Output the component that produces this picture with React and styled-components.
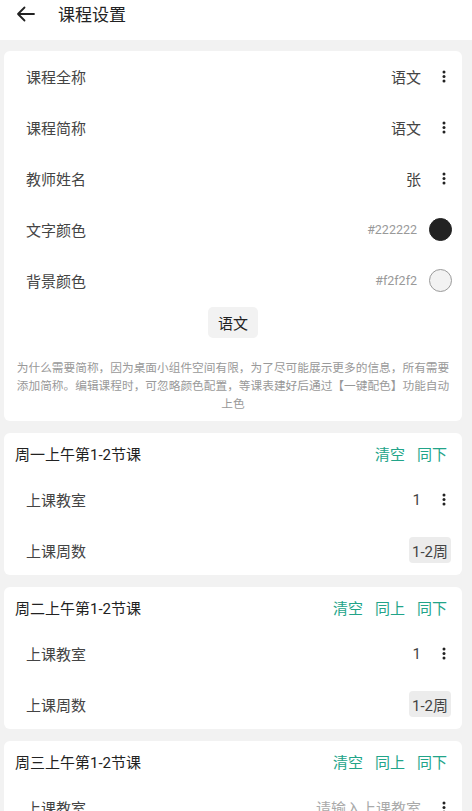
import React from 'react';
import styled, { createGlobalStyle } from 'styled-components';

const GlobalStyle = createGlobalStyle`
  body {
    margin: 0;
    background: #f2f2f2;
    font-family: Roboto, "Noto Sans CJK SC", sans-serif;
    color: #333;
  }
`;

const TopBar = styled.div`
  height: 40px;
  background: #fff;
  display: flex;
  align-items: center;
  padding-left: 15px;
`;

const BackButton = styled.div`
  width: 20px;
  height: 20px;
  display: flex;
  align-items: center;
  justify-content: center;
  margin-top: -13px;
`;

const Title = styled.div`
  margin-left: 23px;
  margin-top: -13px;
  font-size: 17px;
  color: #222;
`;

const List = styled.div`
  display: flex;
  flex-direction: column;
  gap: 12px;
  padding: 11px 10px 0 4px;
`;

const Card = styled.div`
  background: #fff;
  border-radius: 6px;
  padding-bottom: ${p => p.$pb || 0}px;
`;

const Row = styled.div`
  height: ${p => p.$h || 51}px;
  display: flex;
  align-items: center;
  padding-left: 22px;
  padding-right: ${p => p.$pr || 6}px;
`;

const Label = styled.div`
  flex: 1;
  font-size: 15px;
  color: #444;
`;

const Value = styled.div`
  font-size: 15px;
  color: ${p => (p.$placeholder ? '#aaa' : '#444')};
  margin-right: 11px;
`;

const MoreBtn = styled.div`
  width: 24px;
  display: flex;
  justify-content: center;
`;

const Hex = styled.div`
  font-size: 12.5px;
  color: #999;
  margin-right: 12px;
`;

const Swatch = styled.div`
  width: 23px;
  height: 23px;
  border-radius: 50%;
  box-sizing: border-box;
  background: ${p => p.$color};
  border: 1px solid ${p => (p.$light ? '#9a9a9a' : p.$color)};
`;

const PreviewWrap = styled.div`
  display: flex;
  justify-content: center;
  margin-top: 1px;
`;

const Preview = styled.div`
  width: 50px;
  height: 31px;
  border-radius: 5px;
  background: #f2f2f2;
  display: flex;
  align-items: center;
  justify-content: center;
  font-size: 15px;
  color: #222;
`;

const Note = styled.div`
  margin-top: 21px;
  padding: 0 2px;
  font-size: 11.7px;
  line-height: 18px;
  color: #999;
  text-align: center;
  white-space: nowrap;
`;

const SlotHeader = styled.div`
  height: 41px;
  display: flex;
  align-items: center;
  padding: 0 15px 0 11px;
`;

const SlotTitle = styled.div`
  flex: 1;
  font-size: 15px;
  color: #222;
`;

const Actions = styled.div`
  display: flex;
  gap: 12px;
`;

const Action = styled.div`
  font-size: 15px;
  color: #22a489;
`;

const Chip = styled.div`
  height: 26px;
  padding: 0 3px;
  border-radius: 4px;
  background: #ececec;
  display: flex;
  align-items: center;
  font-size: 15px;
  color: #444;
`;

const BackIcon = () => (
  <svg width="19" height="16" viewBox="0 0 19 16" fill="none">
    <path d="M18 8H2M8.5 1.5L2 8l6.5 6.5" stroke="#222" strokeWidth="1.8" strokeLinecap="round" strokeLinejoin="round" />
  </svg>
);

const Dots = () => (
  <svg width="4" height="13" viewBox="0 0 4 13">
    <circle cx="2" cy="2" r="1.5" fill="#222" />
    <circle cx="2" cy="6.5" r="1.5" fill="#222" />
    <circle cx="2" cy="11" r="1.5" fill="#222" />
  </svg>
);

const MenuRow = ({ label, value, placeholder }) => (
  <Row>
    <Label>{label}</Label>
    <Value $placeholder={placeholder}>{value}</Value>
    <MoreBtn><Dots /></MoreBtn>
  </Row>
);

const ColorRow = ({ label, color, light }) => (
  <Row $pr={10}>
    <Label>{label}</Label>
    <Hex>{color}</Hex>
    <Swatch $color={color} $light={light} />
  </Row>
);

const slots = [
  { title: '周一上午第1-2节课', actions: ['清空', '同下'], room: '1', weeks: '1-2周' },
  { title: '周二上午第1-2节课', actions: ['清空', '同上', '同下'], room: '1', weeks: '1-2周' },
  { title: '周三上午第1-2节课', actions: ['清空', '同上', '同下'], room: '', weeks: '1-2周' },
];

export default function App() {
  return (
    <>
      <GlobalStyle />
      <TopBar>
        <BackButton><BackIcon /></BackButton>
        <Title>课程设置</Title>
      </TopBar>
      <List>
        <Card $pb={8}>
          <MenuRow label="课程全称" value="语文" />
          <MenuRow label="课程简称" value="语文" />
          <MenuRow label="教师姓名" value="张" />
          <ColorRow label="文字颜色" color="#222222" />
          <ColorRow label="背景颜色" color="#f2f2f2" light />
          <PreviewWrap>
            <Preview>语文</Preview>
          </PreviewWrap>
          <Note>
            为什么需要简称，因为桌面小组件空间有限，为了尽可能展示更多的信息，所有需要
            <br />
            添加简称。编辑课程时，可忽略颜色配置，等课表建好后通过【一键配色】功能自动
            <br />
            上色
          </Note>
        </Card>
        {slots.map(s => (
          <Card key={s.title}>
            <SlotHeader>
              <SlotTitle>{s.title}</SlotTitle>
              <Actions>
                {s.actions.map(a => <Action key={a}>{a}</Action>)}
              </Actions>
            </SlotHeader>
            <MenuRow
              label="上课教室"
              value={s.room || '请输入上课教室'}
              placeholder={!s.room}
            />
            <Row $pr={11} $h={50}>
              <Label>上课周数</Label>
              <Chip>{s.weeks}</Chip>
            </Row>
          </Card>
        ))}
      </List>
    </>
  );
}
